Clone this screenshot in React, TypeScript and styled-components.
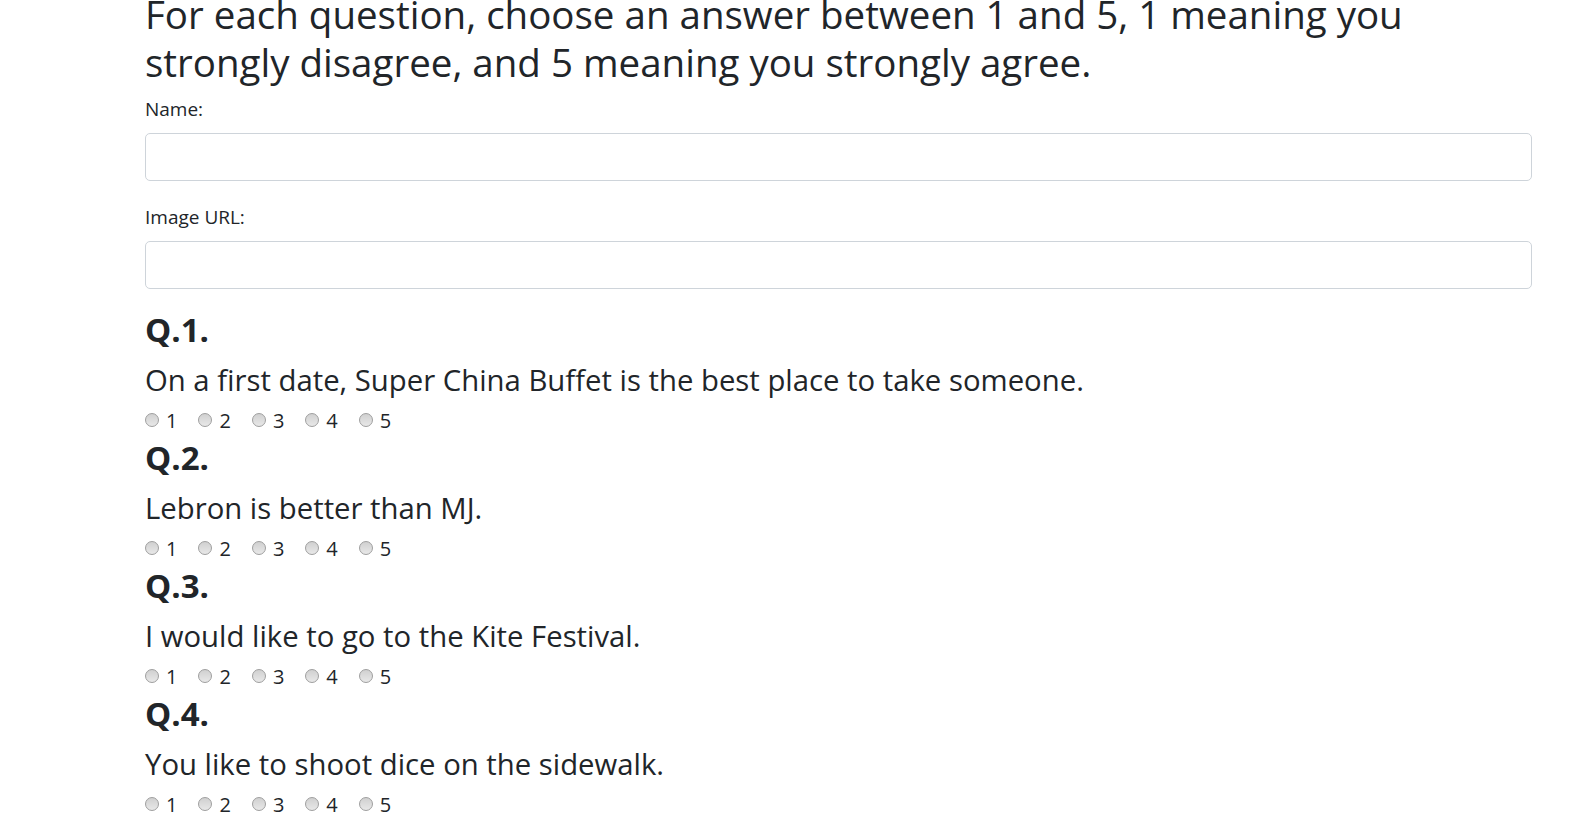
import React from "react";
import styled, { createGlobalStyle } from "styled-components";

const GlobalStyle = createGlobalStyle`
  html, body {
    margin: 0;
    padding: 0;
    overflow: hidden;
    background: #ffffff;
  }
  body {
    font-family: "Open Sans", "Noto Sans", "Liberation Sans", sans-serif;
    color: #212529;
  }
  *, *::before, *::after { box-sizing: border-box; }
`;

const Page = styled.main`
  margin-top: -10px;
  padding: 0 51px 0 145px;
`;

const Title = styled.h1`
  margin: 0 0 10px;
  font-size: 38.5px;
  line-height: 48px;
  font-weight: 500;
  color: #212529;
`;

const Field = styled.div`
  display: flex;
  flex-direction: column;
`;

const FieldLabel = styled.label`
  font-size: 19px;
  line-height: 26px;
  margin-bottom: 11px;
`;

const TextInput = styled.input`
  display: block;
  width: 100%;
  height: 48px;
  margin-bottom: 23px;
  padding: 8px 16px;
  border: 1px solid #ced4da;
  border-radius: 5px;
  background: #fff;
  font: inherit;
  font-size: 20px;
  color: #495057;
  outline: none;
`;

const Question = styled.section`
  display: flex;
  flex-direction: column;
`;

const QNumber = styled.h2`
  margin: 0 0 14px;
  font-size: 33px;
  line-height: 36px;
  font-weight: 700;
  color: #212529;
`;

const QText = styled.h3`
  margin: 0 0 10px;
  font-size: 29.3px;
  line-height: 36px;
  font-weight: 500;
  color: #212529;
`;

const Options = styled.div`
  display: flex;
  align-items: center;
  gap: 21px;
  height: 26px;
  margin-bottom: 6px;
`;

const Option = styled.label`
  display: inline-flex;
  align-items: center;
  font-size: 20px;
  line-height: 26px;
  color: #212529;
`;

const Radio = styled.input`
  appearance: none;
  -webkit-appearance: none;
  width: 14px;
  height: 14px;
  margin: 0 7px 0 0;
  border: 1px solid #9e9e9e;
  border-radius: 50%;
  background: linear-gradient(180deg, #d0d0d0 0%, #e8e8e8 100%);
  position: relative;
  top: -1px;
`;

const questions = [
  "On a first date, Super China Buffet is the best place to take someone.",
  "Lebron is better than MJ.",
  "I would like to go to the Kite Festival.",
  "You like to shoot dice on the sidewalk.",
];

export default function App() {
  return (
    <>
      <GlobalStyle />
      <Page>
        <Title>
          For each question, choose an answer between 1 and 5, 1 meaning you
          strongly disagree, and 5 meaning you strongly agree.
        </Title>
        <Field>
          <FieldLabel htmlFor="name">Name:</FieldLabel>
          <TextInput id="name" type="text" />
        </Field>
        <Field>
          <FieldLabel htmlFor="photo">Image URL:</FieldLabel>
          <TextInput id="photo" type="text" />
        </Field>
        {questions.map((q, i) => (
          <Question key={i}>
            <QNumber>Q.{i + 1}.</QNumber>
            <QText>{q}</QText>
            <Options>
              {[1, 2, 3, 4, 5].map((n) => (
                <Option key={n}>
                  <Radio type="radio" name={`q${i + 1}`} value={n} />
                  {n}
                </Option>
              ))}
            </Options>
          </Question>
        ))}
        <Question>
          <QNumber>Q.5.</QNumber>
        </Question>
      </Page>
    </>
  );
}
